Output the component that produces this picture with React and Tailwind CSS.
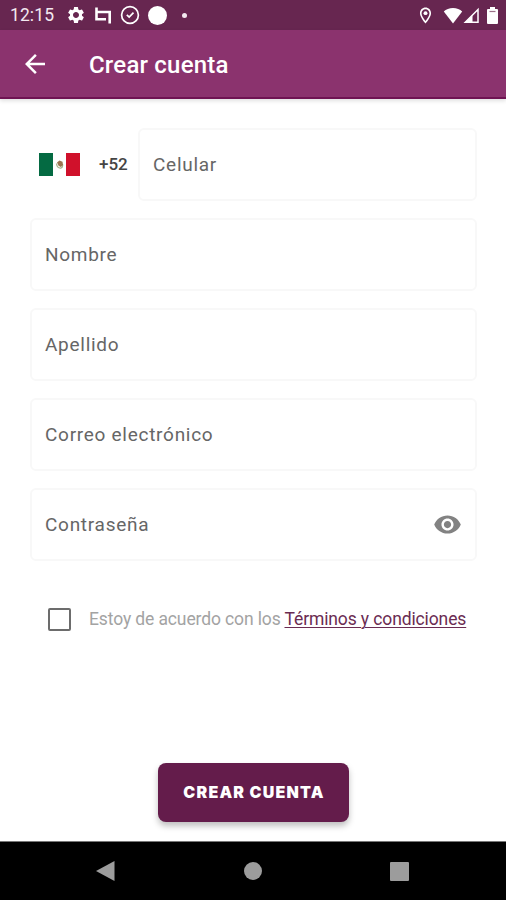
import React from 'react';
import {
  MdArrowBack,
  MdOutlineLocationOn,
  MdSettings,
  MdVisibility,
} from 'react-icons/md';

const StatusBar = () => (
  <div className="flex h-[30px] items-center bg-[#672650] pl-[10px] pr-[8px] text-white">
    <span className="w-[56px] pt-[2px] text-[17.5px] leading-none tracking-[0.1px] text-[#f3e9f0]">12:15</span>
    <MdSettings className="h-[20px] w-[20px]" />
    <svg className="ml-[8px] h-[18px] w-[18px]" viewBox="0 0 18 18" fill="none" stroke="currentColor" strokeWidth="2.6">
      <path d="M2.500 1.500v11.700h9.500" />
      <path d="M2.500 6h13.200v11.500" />
    </svg>
    <svg className="ml-[8px] h-[20px] w-[20px]" viewBox="0 0 20 20" fill="none" stroke="currentColor" strokeWidth="1.7">
      <circle cx="10" cy="10" r="8.4" />
      <path d="M6.800 9.800l2.400 2.300 4.300-4.400" />
    </svg>
    <div className="ml-[8px] h-[19px] w-[19px] rounded-full bg-white" />
    <div className="ml-[15px] h-[5px] w-[5px] rounded-full bg-[#f3e9f0]" />
    <div className="ml-auto flex items-center">
      <MdOutlineLocationOn className="h-[19px] w-[19px]" />
      <svg className="ml-[8px] h-[17px] w-[20px]" viewBox="0 0 20 17" fill="currentColor">
        <path d="M10 16.500L.8 4.600C3 2.300 6.300 1 10 1s7 1.300 9.200 3.600z" />
      </svg>
      <svg className="h-[17px] w-[17px]" viewBox="0 0 17 17">
        <path d="M15 2.500V15.200H2.300z" fill="none" stroke="currentColor" strokeWidth="1.500" />
        <path d="M1.500 16L9.500 8v8z" fill="currentColor" />
      </svg>
      <svg className="ml-[7px] h-[17px] w-[11px]" viewBox="0 0 11 17" fill="currentColor">
        <path d="M3 0h5v2h2q1 0 1 1v13q0 1-1 1H1q-1 0-1-1V3q0-1 1-1h2z" />
        <path d="M2.500 4.500h6" stroke="#9c7089" strokeWidth="1.200" />
      </svg>
    </div>
  </div>
);

const Field = ({ label, children }) => (
  <div className="flex h-[73px] flex-1 items-center justify-between rounded-[6px] border-2 border-[#f8f8f8] bg-white px-[13px]">
    <span className="text-[19px] leading-none tracking-[0.72px] text-[#666]">{label}</span>
    {children}
  </div>
);

const MexicoFlag = () => (
  <svg className="h-[23px] w-[41px]" viewBox="0 0 41 23">
    <rect width="41" height="23" fill="#fff" />
    <rect width="14" height="23" fill="#046a42" />
    <rect x="27" width="14" height="23" fill="#d0112b" />
    <path d="M17.500 10.500q.5 5 4.500 4.500 2-1 1.500-4" fill="none" stroke="#a8b48e" strokeWidth="1.300" />
    <path d="M18 9.500l2.500-2 3 1.200.5 3.300-2.500 2-2-1.500z" fill="#9a7450" />
  </svg>
);

const NavBar = () => (
  <div className="flex h-[59px] items-center justify-between border-t border-[#777] bg-black pl-[96px] pr-[97px] text-[#9c9c9c]">
    <svg className="h-[20px] w-[19px]" viewBox="0 0 19 20" fill="currentColor">
      <path d="M0 10L18.500 0v20z" />
    </svg>
    <div className="h-[18px] w-[18px] rounded-full bg-[#9c9c9c]" />
    <div className="h-[19px] w-[19px] rounded-[1px] bg-[#9c9c9c]" />
  </div>
);

export default function App() {
  return (
    <div className="flex h-[900px] w-[506px] flex-col overflow-hidden bg-white font-['Roboto',sans-serif]">
      <StatusBar />
      <header className="flex h-[69px] items-center border-b-2 border-[#6f1453] bg-[#8b336e] pl-[20px] text-white shadow-[0_2px_4px_rgba(0,0,0,0.12)]">
        <MdArrowBack className="h-[30px] w-[30px]" />
        <h1 className="ml-[39px] pt-[2px] text-[24px] font-medium leading-none tracking-[0.2px]">Crear cuenta</h1>
      </header>

      <main className="flex flex-1 flex-col">
        <div className="flex flex-col gap-[17px] pl-[30px] pr-[29px] pt-[29px]">
          <div className="flex items-center">
            <div className="flex w-[108px] items-center pl-[9px]">
              <MexicoFlag />
              <span className="ml-[19px] text-[17px] font-medium leading-none text-[#444]">+52</span>
            </div>
            <Field label="Celular" />
          </div>
          <div className="flex"><Field label="Nombre" /></div>
          <div className="flex"><Field label="Apellido" /></div>
          <div className="flex"><Field label="Correo electrónico" /></div>
          <div className="flex">
            <Field label="Contraseña">
              <MdVisibility className="h-[29px] w-[29px] text-[#828282]" />
            </Field>
          </div>
        </div>

        <label className="mt-[47px] flex items-center pl-[48px]">
          <span className="h-[23px] w-[23px] rounded-[2px] border-2 border-[#6c6c6c]" />
          <span className="ml-[18px] whitespace-nowrap pt-[1px] text-[17.5px] leading-none tracking-[-0.12px] text-[#a3a3a3]">
            Estoy de acuerdo con los{' '}
            <a className="text-[#6b2c52] underline decoration-1 underline-offset-2">Términos y condiciones</a>
          </span>
        </label>

        <button className="mx-auto mb-[19px] mt-auto h-[59px] w-[191px] rounded-[8px] bg-[#641c4b] pb-[1px] pl-[2px] font-['Inter',sans-serif] text-[16px] font-black leading-none tracking-[1.2px] text-white shadow-[0_4px_6px_rgba(0,0,0,0.25)]">
          CREAR CUENTA
        </button>
      </main>
      <NavBar />
    </div>
  );
}
